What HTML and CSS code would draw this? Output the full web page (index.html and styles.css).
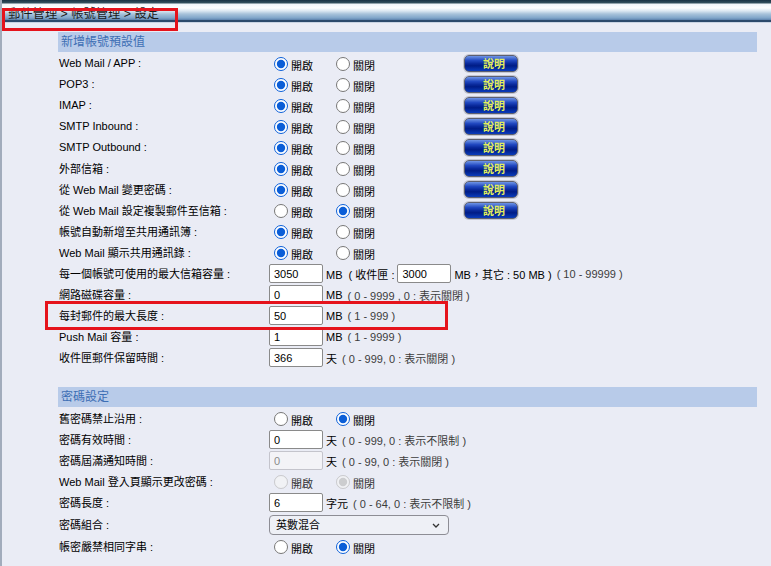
FILE: index.html
```html
<!DOCTYPE html>
<html lang="zh-Hant">
<head>
  <meta charset="UTF-8">
  <title>帳號管理 - 設定</title>
  <link rel="stylesheet" href="styles.css">
</head>
<body>
  <div class="page">
    <div class="topbar">
      <span class="crumb">郵件管理 &gt; 帳號管理 &gt; 設定</span>
    </div>

    <div class="content">
      <div class="group">
        <div class="group-title">新增帳號預設值</div>

        <div class="row">
          <div class="label">Web Mail / APP :</div>
          <div class="ctrl">
            <div class="radios">
              <label class="opt"><input type="radio" name="r1" checked><span>開啟</span></label>
              <label class="opt"><input type="radio" name="r1"><span>關閉</span></label>
            </div>
            <button class="help">說明</button>
          </div>
        </div>
        <div class="row">
          <div class="label">POP3 :</div>
          <div class="ctrl">
            <div class="radios">
              <label class="opt"><input type="radio" name="r2" checked><span>開啟</span></label>
              <label class="opt"><input type="radio" name="r2"><span>關閉</span></label>
            </div>
            <button class="help">說明</button>
          </div>
        </div>
        <div class="row">
          <div class="label">IMAP :</div>
          <div class="ctrl">
            <div class="radios">
              <label class="opt"><input type="radio" name="r3" checked><span>開啟</span></label>
              <label class="opt"><input type="radio" name="r3"><span>關閉</span></label>
            </div>
            <button class="help">說明</button>
          </div>
        </div>
        <div class="row">
          <div class="label">SMTP Inbound :</div>
          <div class="ctrl">
            <div class="radios">
              <label class="opt"><input type="radio" name="r4" checked><span>開啟</span></label>
              <label class="opt"><input type="radio" name="r4"><span>關閉</span></label>
            </div>
            <button class="help">說明</button>
          </div>
        </div>
        <div class="row">
          <div class="label">SMTP Outbound :</div>
          <div class="ctrl">
            <div class="radios">
              <label class="opt"><input type="radio" name="r5" checked><span>開啟</span></label>
              <label class="opt"><input type="radio" name="r5"><span>關閉</span></label>
            </div>
            <button class="help">說明</button>
          </div>
        </div>
        <div class="row">
          <div class="label">外部信箱 :</div>
          <div class="ctrl">
            <div class="radios">
              <label class="opt"><input type="radio" name="r6" checked><span>開啟</span></label>
              <label class="opt"><input type="radio" name="r6"><span>關閉</span></label>
            </div>
            <button class="help">說明</button>
          </div>
        </div>
        <div class="row">
          <div class="label">從 Web Mail 變更密碼 :</div>
          <div class="ctrl">
            <div class="radios">
              <label class="opt"><input type="radio" name="r7" checked><span>開啟</span></label>
              <label class="opt"><input type="radio" name="r7"><span>關閉</span></label>
            </div>
            <button class="help">說明</button>
          </div>
        </div>
        <div class="row">
          <div class="label">從 Web Mail 設定複製郵件至信箱 :</div>
          <div class="ctrl">
            <div class="radios">
              <label class="opt"><input type="radio" name="r8"><span>開啟</span></label>
              <label class="opt"><input type="radio" name="r8" checked><span>關閉</span></label>
            </div>
            <button class="help">說明</button>
          </div>
        </div>
        <div class="row">
          <div class="label">帳號自動新增至共用通訊簿 :</div>
          <div class="ctrl">
            <div class="radios">
              <label class="opt"><input type="radio" name="r9" checked><span>開啟</span></label>
              <label class="opt"><input type="radio" name="r9"><span>關閉</span></label>
            </div>
          </div>
        </div>
        <div class="row">
          <div class="label">Web Mail 顯示共用通訊錄 :</div>
          <div class="ctrl">
            <div class="radios">
              <label class="opt"><input type="radio" name="r10" checked><span>開啟</span></label>
              <label class="opt"><input type="radio" name="r10"><span>關閉</span></label>
            </div>
          </div>
        </div>
        <div class="row">
          <div class="label">每一個帳號可使用的最大信箱容量 :</div>
          <div class="ctrl">
            <input class="num" type="text" value="3050">
            <span class="unit">MB&nbsp; ( 收件匣 :</span>
            <input class="num" type="text" value="3000">
            <span class="unit">MB，其它 : 50 MB )</span>
            <span class="hint">( 10 - 99999 )</span>
          </div>
        </div>
        <div class="row">
          <div class="label">網路磁碟容量 :</div>
          <div class="ctrl">
            <input class="num" type="text" value="0">
            <span class="unit">MB</span>
            <span class="hint">( 0 - 9999 , 0 : 表示關閉 )</span>
          </div>
        </div>
        <div class="row">
          <div class="label">每封郵件的最大長度 :</div>
          <div class="ctrl">
            <input class="num" type="text" value="50">
            <span class="unit">MB</span>
            <span class="hint">( 1 - 999 )</span>
          </div>
        </div>
        <div class="row">
          <div class="label">Push Mail 容量 :</div>
          <div class="ctrl">
            <input class="num" type="text" value="1">
            <span class="unit">MB</span>
            <span class="hint">( 1 - 9999 )</span>
          </div>
        </div>
        <div class="row">
          <div class="label">收件匣郵件保留時間 :</div>
          <div class="ctrl">
            <input class="num" type="text" value="366">
            <span class="unit">天</span>
            <span class="hint">( 0 - 999, 0 : 表示關閉 )</span>
          </div>
        </div>
      </div>

      <div class="group">
        <div class="group-title">密碼設定</div>

        <div class="row">
          <div class="label">舊密碼禁止沿用 :</div>
          <div class="ctrl">
            <div class="radios">
              <label class="opt"><input type="radio" name="p1"><span>開啟</span></label>
              <label class="opt"><input type="radio" name="p1" checked><span>關閉</span></label>
            </div>
          </div>
        </div>
        <div class="row">
          <div class="label">密碼有效時間 :</div>
          <div class="ctrl">
            <input class="num" type="text" value="0">
            <span class="unit">天</span>
            <span class="hint">( 0 - 999, 0 : 表示不限制 )</span>
          </div>
        </div>
        <div class="row">
          <div class="label">密碼屆滿通知時間 :</div>
          <div class="ctrl">
            <input class="num" type="text" value="0" disabled>
            <span class="unit">天</span>
            <span class="hint">( 0 - 99, 0 : 表示關閉 )</span>
          </div>
        </div>
        <div class="row">
          <div class="label">Web Mail 登入頁顯示更改密碼 :</div>
          <div class="ctrl">
            <div class="radios">
              <label class="opt off"><input type="radio" name="p2" disabled><span>開啟</span></label>
              <label class="opt off"><input type="radio" name="p2" checked disabled><span>關閉</span></label>
            </div>
          </div>
        </div>
        <div class="row">
          <div class="label">密碼長度 :</div>
          <div class="ctrl">
            <input class="num" type="text" value="6">
            <span class="unit">字元</span>
            <span class="hint">( 0 - 64, 0 : 表示不限制 )</span>
          </div>
        </div>
        <div class="row row-select">
          <div class="label">密碼組合 :</div>
          <div class="ctrl">
            <span class="combo-wrap">
              <select class="combo">
                <option>英數混合</option>
                <option>僅英文</option>
                <option>僅數字</option>
              </select>
              <svg class="chev" width="8" height="5" viewBox="0 0 8 5"><path d="M1 1l3 3 3-3" fill="none" stroke="#333" stroke-width="1.3"/></svg>
            </span>
          </div>
        </div>
        <div class="row">
          <div class="label">帳密嚴禁相同字串 :</div>
          <div class="ctrl">
            <div class="radios">
              <label class="opt"><input type="radio" name="p3"><span>開啟</span></label>
              <label class="opt"><input type="radio" name="p3" checked><span>關閉</span></label>
            </div>
          </div>
        </div>
      </div>
    </div>

    <!-- highlight boxes drawn over the page -->
    <div class="mark mark-crumb"></div>
    <div class="mark mark-size"></div>
  </div>
</body>
</html>
```

FILE: styles.css
```css
html, body {
  margin: 0;
  padding: 0;
  background: #eaecf5;
}
body {
  font-family: "Liberation Sans", Arial, "Noto Sans CJK TC", sans-serif;
  font-size: 11px;
  color: #000;
}
.page {
  position: relative;
  min-height: 566px;
  border-left: 2px solid #a2acbc;
  overflow: hidden;
}
.topbar {
  height: 23px;
  background: linear-gradient(to bottom,
    #1a3244 0px, #35525f 3px,
    #f2f6fa 4px, #ffffff 8px,
    #d9e6f1 11px, #a7c2da 14px,
    #7fa5c9 18px, #5b80aa 20px,
    #2c496b 20px, #2c496b 22px,
    #c9d3e2 22px, #c9d3e2 23px);
}
.crumb {
  display: inline-block;
  padding: 7px 0 0 6px;
  font-size: 12.3px;
  line-height: 15px;
  color: #1b1b1b;
}
.content {
  padding: 9px 14px 0 56px;
}
.group {
  margin-bottom: 19px;
}
.group-title {
  height: 20px;
  line-height: 20px;
  padding-left: 3px;
  margin-bottom: 1px;
  background: #b8cbe9;
  color: #3d6eb4;
  font-size: 12px;
}
.row {
  display: flex;
  align-items: center;
  height: 21px;
}
.row-select {
  height: 23px;
}
.label {
  width: 210px;
  padding-left: 1px;
  padding-bottom: 1px;
  flex-shrink: 0;
  white-space: nowrap;
}
.ctrl {
  display: flex;
  align-items: center;
  white-space: nowrap;
}
.radios {
  display: flex;
  width: 195px;
}
.opt {
  display: inline-flex;
  align-items: center;
  width: 62px;
}
.opt input {
  width: 14px;
  height: 14px;
  margin: 0 3px 0 5px;
  accent-color: #0b5ed7;
}
.opt span {
  padding-top: 3px;
}
.opt.off span {
  color: #333;
}
.help {
  width: 54px;
  height: 17px;
  padding: 0;
  border: 1px solid #5d6070;
  border-radius: 5px;
  box-shadow: 0 0 0 1px #c4c6d2;
  background: linear-gradient(to bottom,
    #6f95e6 0%, #2148c0 30%, #0a2a9c 50%, #001c86 65%, #0a3cbc 100%);
  color: #e2ef5c;
  font-family: "Noto Sans CJK TC", sans-serif;
  font-size: 11px;
  font-weight: bold;
  line-height: 15px;
  text-indent: 6px;
}
.num {
  box-sizing: border-box;
  width: 54px;
  height: 19px;
  padding: 0 4px;
  border: 1px solid #8a8a8a;
  border-radius: 2px;
  background: #fff;
  font-family: "Liberation Sans", Arial, sans-serif;
  font-size: 11px;
  color: #000;
}
.num:disabled {
  background: #f3f3f7;
  border-color: #c4c4cc;
  color: #8a8a8a;
}
.unit {
  margin: 0 3px 0 3px;
}
.hint {
  color: #3c3c3c;
  margin-left: 2px;
  margin-right: 3px;
}
.combo-wrap {
  position: relative;
  display: inline-block;
  height: 20px;
}
.combo {
  box-sizing: border-box;
  width: 180px;
  height: 20px;
  padding: 0 6px;
  border: 1px solid #8d8d95;
  border-radius: 4px;
  background: #eef0f6;
  appearance: none;
  -webkit-appearance: none;
  font-family: "Liberation Sans", Arial, "Noto Sans CJK TC", sans-serif;
  font-size: 11px;
  color: #000;
}
.chev {
  position: absolute;
  right: 9px;
  top: 8px;
  pointer-events: none;
}
.mark {
  position: absolute;
  border: 3px solid #e5131c;
  pointer-events: none;
}
.mark-crumb {
  left: 0px;
  top: 8px;
  width: 170px;
  height: 17px;
}
.mark-size {
  left: 43px;
  top: 301px;
  width: 397px;
  height: 23px;
}
```
